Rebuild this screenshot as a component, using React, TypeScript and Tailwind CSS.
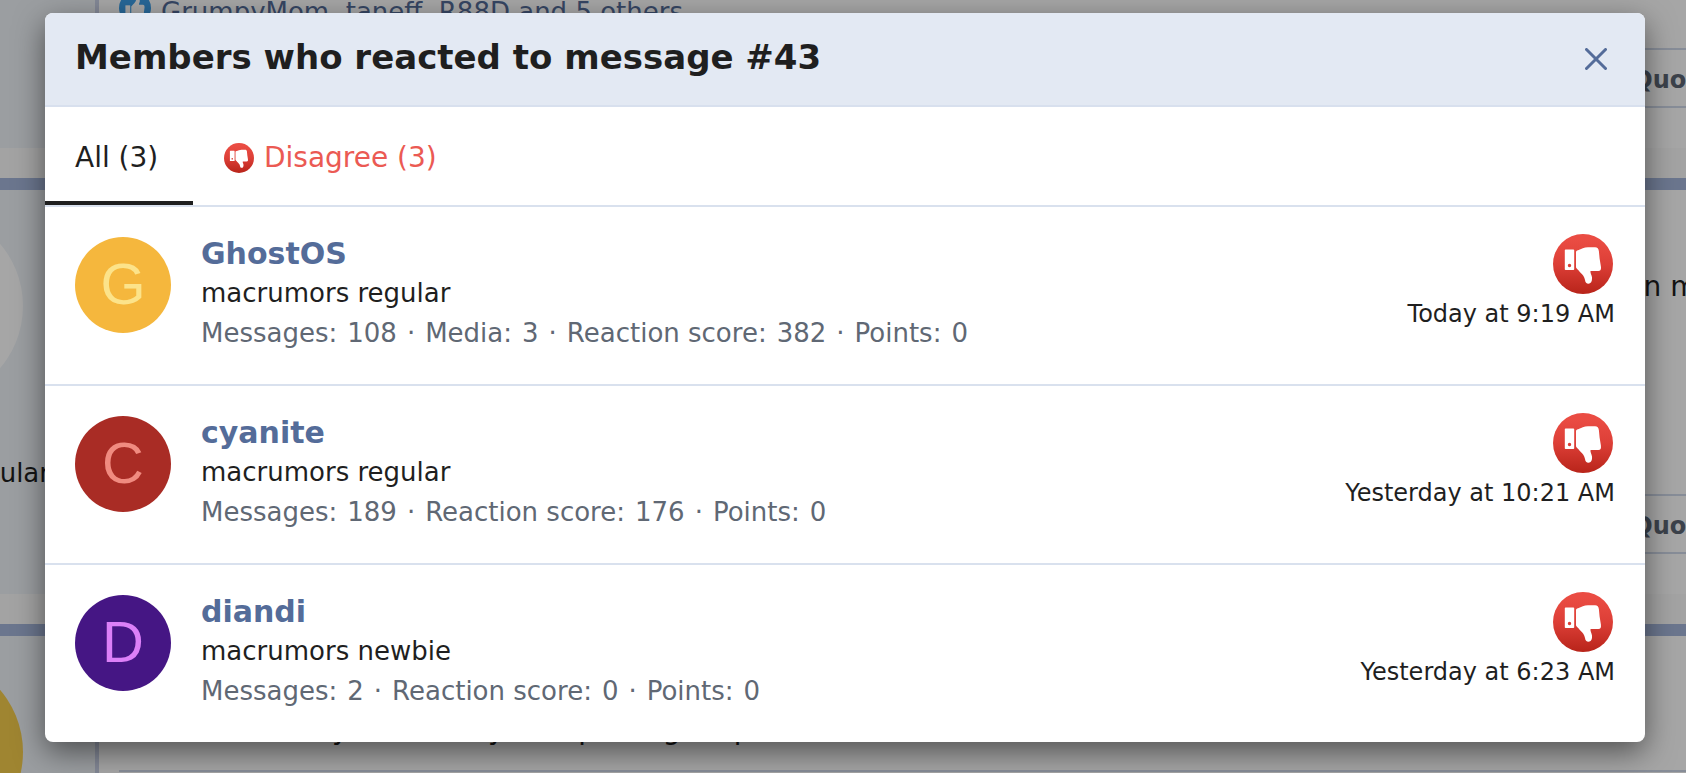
import { useId, type ReactNode } from "react";

type Member = {
  name: string;
  title: string;
  stats: [string, string][];
  time: string;
  avatar: string;
};

const members: Member[] = [
  {
    name: "GhostOS",
    title: "macrumors regular",
    stats: [["Messages:", "108"], ["Media:", "3"], ["Reaction score:", "382"], ["Points:", "0"]],
    time: "Today at 9:19 AM",
    avatar: "bg-[#f5b73d] text-[#fce38a]",
  },
  {
    name: "cyanite",
    title: "macrumors regular",
    stats: [["Messages:", "189"], ["Reaction score:", "176"], ["Points:", "0"]],
    time: "Yesterday at 10:21 AM",
    avatar: "bg-[#a92c25] text-[#f08b80]",
  },
  {
    name: "diandi",
    title: "macrumors newbie",
    stats: [["Messages:", "2"], ["Reaction score:", "0"], ["Points:", "0"]],
    time: "Yesterday at 6:23 AM",
    avatar: "bg-[#451684] text-[#dc80f8]",
  },
];

function ThumbsDown({ className }: { className: string }) {
  const id = useId();
  return (
    <svg viewBox="0 0 60 60" className={className} role="img" aria-label="Disagree">
      <defs>
        <linearGradient id={id} x1="0" y1="0" x2="0" y2="1">
          <stop offset="0.1" stopColor="#ea4c43" />
          <stop offset="0.5" stopColor="#dd3f37" />
          <stop offset="1" stopColor="#b8241a" />
        </linearGradient>
      </defs>
      <circle cx="30" cy="30" r="30" fill={`url(#${id})`} />
      <path
        fill="#fff"
        fillRule="evenodd"
        d="M12.6 15.5h7.800q.8 0 .8.8v19q0 .8-.8.8h-7.800q-.8 0-.8-.8v-19q0-.8.8-.8zM16.500 29.800a1.700 1.700 0 1 0 0 3.400 1.700 1.700 0 0 0 0-3.400z"
      />
      <path
        fill="#fff"
        d="M23 18.200C23 17 23.700 16.600 25 16.200C28.500 14.900 31 13.500 35 13.300H42C44.500 13.300 45.600 14.600 45.900 17.200L46.600 24.500L47.900 32.500C48.300 35.500 47.600 37 45.300 37H37.600C36.900 38.600 38.700 41 39 43.500C39.300 47.500 38 49.700 35.500 49.700C33.400 49.700 32.400 48.500 32 46C31.400 42.500 29.500 40.600 27.800 39C26.300 37.300 24.500 35.300 23.500 34.300Q23 33.800 23 33Z"
      />
    </svg>
  );
}

function ThumbsUp() {
  return (
    <svg viewBox="0 0 60 60" className="size-8 shrink-0" aria-hidden="true">
      <circle cx="30" cy="30" r="30" fill="#3c9fe8" />
      <g transform="matrix(1 0 0 -1 0 61)" fill="#fff">
        <path d="M12 15h9v21h-9z" />
        <path d="M23 18C28 15 31 13.500 35 13.500H42C45 13.500 46 15 46 17L48 33Q48 37 45 37H37.600C37 39 39 41 39 44C39 48 38 50 35.500 50C33 50 32.400 48 32 46C31 42 29 40 23 34Z" />
      </g>
    </svg>
  );
}

function MemberRow({ member }: { member: Member }) {
  return (
    <li className="flex gap-[30px] px-[30px] pt-[30px] pb-[31px]">
      <a
        href="#member"
        aria-label={member.name}
        className={`flex size-24 shrink-0 items-center justify-center rounded-full pb-1 font-['Liberation_Sans',sans-serif] text-[58px] ${member.avatar}`}
      >
        {member.name[0].toUpperCase()}
      </a>
      <div className="min-w-0 flex-1">
        <h3 className="mb-[2px] text-[30px] leading-[34px] font-bold">
          <a href="#member" className="text-[#546c99]">
            {member.name}
          </a>
        </h3>
        <p className="text-[26px] leading-[40px]">{member.title}</p>
        <dl className="flex flex-wrap gap-x-[10px] text-[26px] leading-[40px] text-[#606874]">
          {member.stats.map(([label, value], i) => (
            <div key={label} className="flex gap-[10px]">
              {i > 0 && <span aria-hidden="true">·</span>}
              <dt>{label}</dt>
              <dd>{value}</dd>
            </div>
          ))}
        </dl>
      </div>
      <div className="-mt-[3px] flex flex-col items-end gap-1">
        <ThumbsDown className="mr-[2px] size-[60px]" />
        <time className="text-[24px] leading-[32px]">{member.time}</time>
      </div>
    </li>
  );
}

function Post({ side, className, children }: { side: ReactNode; className: string; children: ReactNode }) {
  return (
    <article className={`flex shrink-0 ${className}`}>
      <div className="flex w-[99px] shrink-0 flex-col items-end overflow-hidden border-r-4 border-[#c9d2e6] bg-[#eef3f8]">
        {side}
      </div>
      <div className="flex min-w-0 flex-1 flex-col overflow-hidden bg-white pl-5">{children}</div>
    </article>
  );
}

function PostActions() {
  return (
    <div className="flex h-[60px] shrink-0 items-center justify-end border-y-2 border-[#cfd9ea] pt-1">
      <button type="button" className="-mr-7 text-[24px] font-bold text-[#5c6673]">
        Quote
      </button>
    </div>
  );
}

export default function App() {
  return (
    <div className="relative flex h-screen flex-col overflow-hidden bg-[#fafafa] font-['DejaVu_Sans',sans-serif] text-[#1f1f1f]">
      <div className="flex min-h-0 flex-1 flex-col gap-[30px] whitespace-nowrap" aria-hidden="true">
        <Post className="h-[148px]" side={null}>
          <p className="flex h-12 shrink-0 items-start gap-[10px] text-[26px] leading-[24px] text-[#546c99]">
            <span className="-mt-2"><ThumbsUp /></span>
            GrumpyMom, taneff, R88D and 5 others
          </p>
          <PostActions />
        </Post>
        <Post
          className="h-[416px] border-t-12 border-[#a5b5da]"
          side={
            <>
              <div className="mt-5 mr-[72px] size-48 shrink-0 rounded-full bg-white" />
              <p className="mt-[55px] mr-[45px] text-[26px] leading-[32px]">macrumors regular</p>
            </>
          }
        >
          <p className="mt-[78px] -mr-7 mb-auto self-end text-[28px] leading-[38px]">in my</p>
          <PostActions />
          <div className="h-10 shrink-0" />
        </Post>
        <Post
          className="flex-1 border-t-12 border-[#a5b5da]"
          side={<div className="mt-5 mr-[72px] size-48 shrink-0 rounded-full bg-[#f5cc4c]" />}
        >
          <p className="mt-[78px] border-b-2 border-[#cfd9ea] pb-6 pl-8 text-[28px] leading-[32px]">
            Could it easily in one day. I stop using maps
          </p>
        </Post>
      </div>

      <div className="absolute inset-0 flex items-start justify-center bg-black/35 px-[41px] pt-[13px] pl-[45px]">
        <section
          role="dialog"
          aria-modal="true"
          aria-labelledby="reactions-title"
          className="w-full overflow-hidden rounded-lg bg-white shadow-[0_10px_30px_rgba(0,0,0,0.5)]"
        >
          <header className="flex items-center justify-between border-b-2 border-[#d8e0ee] bg-[#e3e9f3] px-[30px] pt-5 pb-6">
            <h2 id="reactions-title" className="text-[34px] leading-[48px] font-bold">
              Members who reacted to message #43
            </h2>
            <button type="button" aria-label="Close" className="flex h-12 w-[38px] items-center justify-center pt-1 text-[#546c99]">
              <svg viewBox="0 0 22 22" className="size-[22px]" fill="none" stroke="currentColor" strokeWidth="3" strokeLinecap="round">
                <path d="M1.500 1.500l19 19M20.500 1.500l-19 19" />
              </svg>
            </button>
          </header>
          <nav role="tablist" className="flex border-b-2 border-[#d9e1ee] text-[28px] leading-[34px]">
            <button type="button" role="tab" aria-selected="true" className="min-w-[148px] border-b-4 border-[#1f1f1f] px-[30px] pt-[34px] pb-[26px] text-left">
              All (3)
            </button>
            <button type="button" role="tab" aria-selected="false" className="flex items-center gap-[10px] border-b-4 border-transparent px-[31px] pt-[34px] pb-[26px] text-[#eb5a53]">
              <ThumbsDown className="size-[30px]" />
              Disagree (3)
            </button>
          </nav>
          <ul className="divide-y-2 divide-[#d9e1ee]">
            {members.map((m) => (
              <MemberRow key={m.name} member={m} />
            ))}
          </ul>
        </section>
      </div>
    </div>
  );
}
